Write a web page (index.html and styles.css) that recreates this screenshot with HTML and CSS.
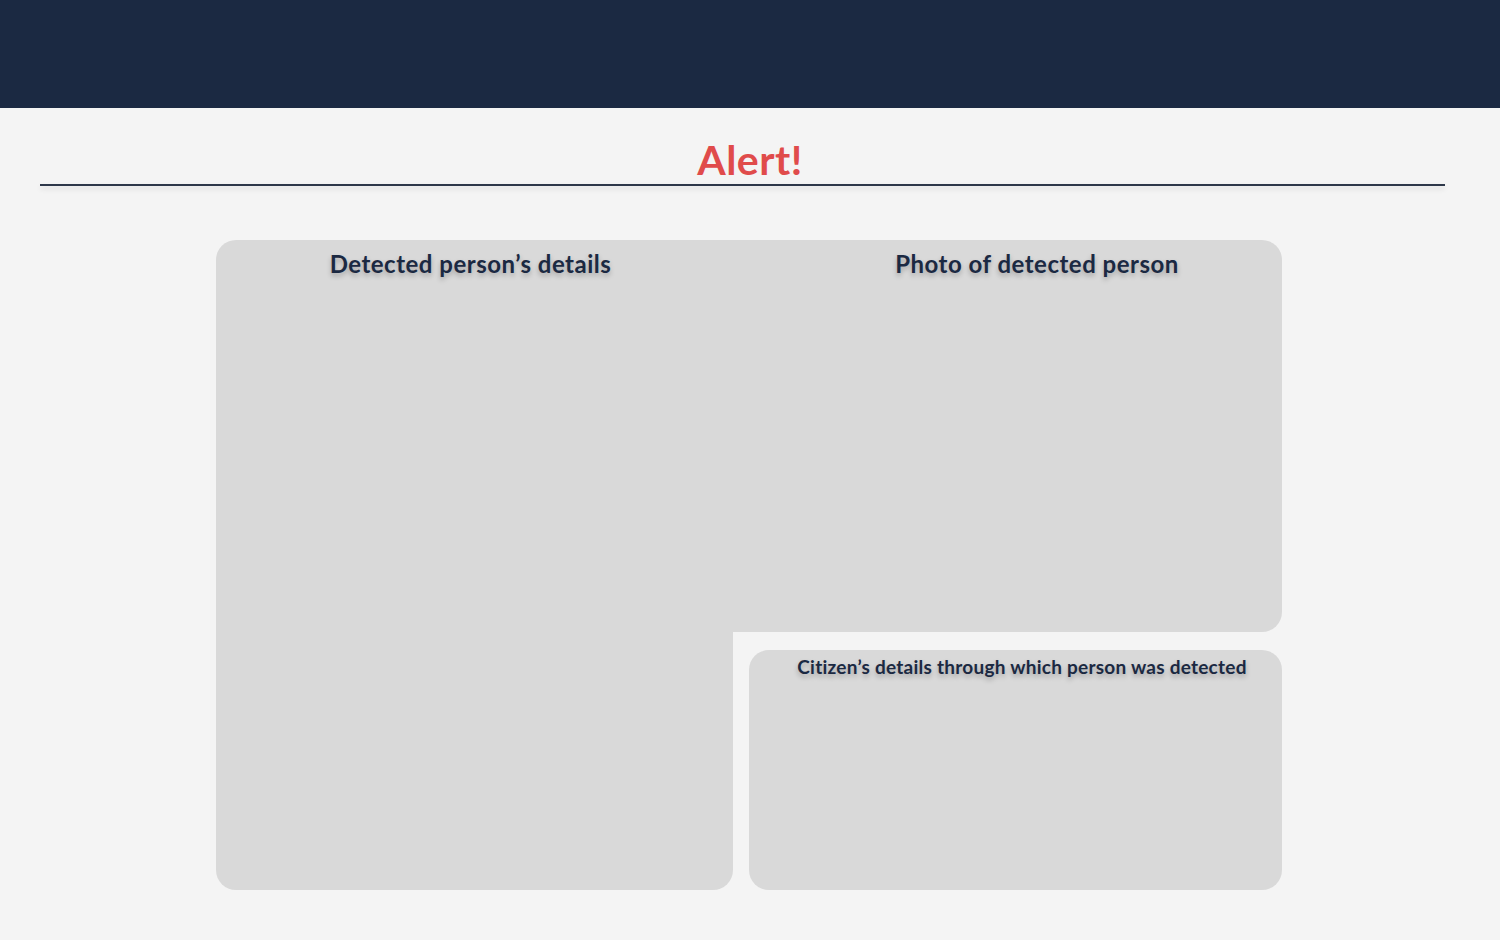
FILE: index.html
```html
<!DOCTYPE html>
<html>
<head>
<meta charset="utf-8">
<link rel="stylesheet" href="styles.css">
</head>
<body>
<header class="topbar"></header>
<main class="page">
  <div class="title-wrap">
    <h1 class="title">Alert!</h1>
  </div>
  <hr class="divider">
  <section class="board">
    <div class="panel panel-details">
      <h2 class="panel-title">Detected person’s details</h2>
    </div>
    <div class="panel panel-photo">
      <h2 class="panel-title">Photo of detected person</h2>
    </div>
    <div class="panel panel-citizen">
      <h3 class="panel-subtitle">Citizen’s details through which person was detected</h3>
    </div>
  </section>
</main>
</body>
</html>
```
FILE: styles.css
```css
* { box-sizing: border-box; }
html, body {
  margin: 0;
  padding: 0;
  background: #f4f4f4;
  font-family: "Lato", "Open Sans", sans-serif;
  width: 1500px;
  height: 940px;
  overflow: hidden;
}
.topbar {
  height: 108px;
  background: #1b2942;
}
.page {
  display: flex;
  flex-direction: column;
}
.title-wrap {
  display: flex;
  justify-content: center;
  margin-top: 28px;
}
.title {
  margin: 0;
  color: #e04b4b;
  font-size: 41px;
  font-weight: 700;
  line-height: 48px;
  letter-spacing: 0.5px;
}
.divider {
  margin: 0 55px 0 40px;
  border: 0;
  height: 2px;
  background: #2d3749;
  box-shadow: 0 3px 5px rgba(0,0,0,0.12);
}
.board {
  margin: 54px 0 0 216px;
  width: 1066px;
  display: grid;
  grid-template-columns: 517px 549px;
  grid-template-rows: 392px 258px;
}
.panel {
  background: #d9d9d9;
}
.panel-details {
  grid-row: 1 / 3;
  grid-column: 1;
  border-radius: 20px 0 20px 20px;
  text-align: center;
}
.panel-photo {
  grid-row: 1;
  grid-column: 2;
  border-radius: 0 20px 20px 0;
  padding-left: 59px;
  text-align: center;
}
.panel-citizen {
  grid-row: 2;
  grid-column: 2;
  margin: 18px 0 0 16px;
  border-radius: 20px;
  padding-left: 13px;
  text-align: center;
}
.panel-title {
  margin: 9px 0 0;
  font-size: 24px;
  line-height: 30px;
  font-weight: 700;
  letter-spacing: 0.5px;
  color: #1b2942;
  text-shadow: 0 3px 5px rgba(0,0,0,0.25);
}
.panel-details .panel-title { padding-right: 8px; }
.panel-subtitle {
  margin: 4px 0 0;
  font-size: 19px;
  line-height: 26px;
  font-weight: 700;
  letter-spacing: 0.25px;
  color: #1b2942;
  text-shadow: 0 3px 5px rgba(0,0,0,0.25);
}
```
